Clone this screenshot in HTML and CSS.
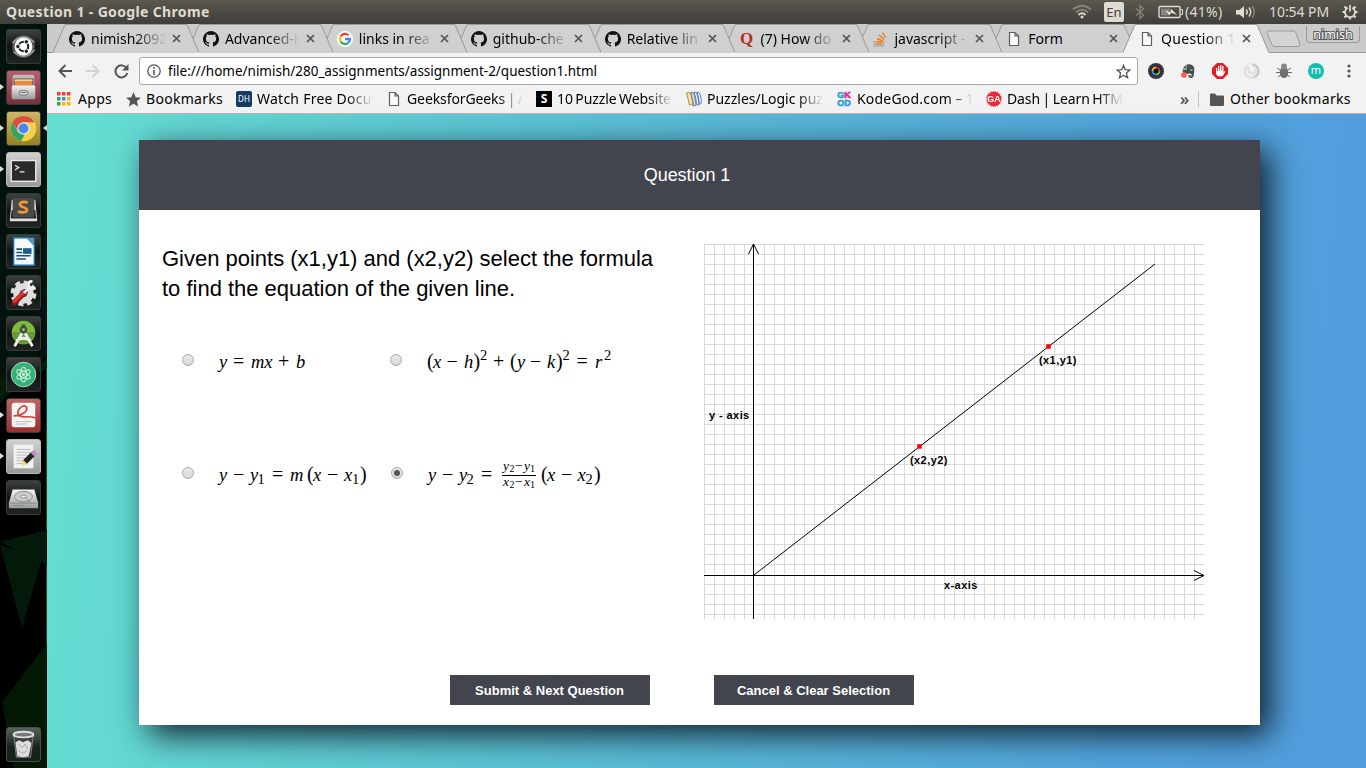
FILE: index.html
```html
<!DOCTYPE html>
<html lang="en">
<head>
<meta charset="utf-8">
<title>Question 1</title>
<link rel="stylesheet" href="styles.css">
</head>
<body>
<svg class="defs" width="0" height="0">
  <defs>
    <symbol id="github" viewBox="0 0 16 16"><path fill="#111" d="M8 0a8 8 0 0 0-2.5 15.6c.4.1.5-.2.5-.4v-1.4c-2.2.5-2.7-1-2.7-1-.4-.9-.9-1.2-.9-1.2-.7-.5.1-.5.1-.5.8.1 1.2.8 1.2.8.7 1.3 1.9.9 2.3.7.1-.5.3-.9.5-1.1C3.700 11.300 2.900 10 2.900 7.500c0-.9.300-1.600.800-2.100-.1-.2-.4-1 .1-2.100 0 0 .7-.2 2.200.8a7.500 7.500 0 0 1 4 0c1.500-1 2.200-.8 2.200-.8.4 1.100.2 1.900.1 2.100.5.600.8 1.300.8 2.100 0 2.500-1 3.800-3.600 4.100.3.200.5.700.5 1.400v2.200c0 .2.1.5.500.4A8 8 0 0 0 8 0Z"/></symbol>
    <symbol id="page" viewBox="0 0 12 16"><path fill="#fafafa" stroke="#606060" stroke-width="1.2" d="M1.500 1.500h5.500l3.500 3.500v9.500h-9zM7 1.500v3.500h3.500"/></symbol>
    <symbol id="close" viewBox="0 0 9 9"><path stroke="#555" stroke-width="1.7" d="M1 1l7 7M8 1l-7 7"/></symbol>
    <symbol id="tabshape" viewBox="0 0 146 29"><path fill="#d0d0d0" d="M0 29L12 .5H134L146 29Z"/><path fill="none" stroke="#999" d="M0 28.500L12 .5H134L146 28.500"/></symbol>
    <linearGradient id="metal" x2="0" y2="1"><stop stop-color="#f4f4f4"/><stop offset="1" stop-color="#999"/></linearGradient>
  </defs>
</svg>
<div class="screen">
  <header class="panel">
    <span class="wintitle">Question 1 - Google Chrome</span>
    <div class="tray">
      <svg class="wifi" width="20" height="16" viewBox="0 0 20 16" fill="none" stroke-width="1.800"><path stroke="#85827a" d="M1 5.500Q10-2 19 5.500M4 8.500Q10 3 16 8.500"/><path stroke="#dfdbd2" d="M6.500 11Q10 7.500 13.500 11"/><circle cx="10" cy="13" r="1.500" fill="#dfdbd2"/></svg>
      <span class="lang">En</span>
      <svg class="bt" width="10" height="16" viewBox="0 0 10 16" fill="none" stroke="#85827a" stroke-width="1.300"><path d="M1 4.500L8.500 11L5 14.500V1.500L8.500 5L1 11.500"/></svg>
      <svg class="batt" width="25" height="14" viewBox="0 0 25 14"><rect x="1" y="1.500" width="21" height="11" rx="1" fill="none" stroke="#dfdbd2" stroke-width="1.400"/><path fill="#898780" d="M3 3.500h9v7H3z"/><path fill="none" stroke="#dfdbd2" d="M22.500 4.500h2v5h-2"/><path fill="#eeeae2" stroke="#45433d" stroke-width=".6" d="M5 3.500L12 7l1-3.500 7 7L13 8l-1.500 3z"/></svg>
      <span class="pct">(41%)</span>
      <svg class="vol" width="20" height="14" viewBox="0 0 20 14"><path fill="#dfdbd2" d="M0 5h3.500L8 1v12L3.500 9.500H0z"/><path fill="none" stroke="#dfdbd2" stroke-width="1.500" d="M10 4.500q2.500 2.500 0 5M13 2.500q3.500 4.500 0 9"/><path fill="none" stroke="#85827a" stroke-width="1.500" d="M16 1q4.500 6 0 12"/></svg>
      <span class="clock">10:54 PM</span>
      <svg class="gear" width="16" height="16" viewBox="0 0 16 16" fill="none" stroke="#dfdbd2"><path stroke-width="1.700" d="M5.800 3.700a5 5 0 1 0 4.400 0M8 1v6.500"/><path stroke-width="2.200" d="M.5 8h2.500M13 8h2.500M2.500 2.500L4.300 4.300M13.500 2.500l-1.800 1.800M2.500 13.500l1.800-1.800M13.500 13.500l-1.800-1.800M8 13v2.500"/></svg>
    </div>
  </header>
  <div class="desktop">
    <nav class="launcher">
      <svg class="wall" width="47" height="744" viewBox="0 0 47 744"><path fill="#02120d" d="M0 0h47v330L0 380z"/><path fill="#03190a" d="M0 518L47 506v35zM0 521l42 13-20 70z"/><path fill="#041905" d="M47 620L2 678l12 66h33z"/><path fill="#08110f" d="M20 190l27 90v60z"/><path fill="#041c09" d="M0 354l47-18v8L0 376z"/></svg>
      <span class="tile black"><svg viewBox="0 0 35 35"><circle cx="17.500" cy="17.500" r="12" fill="#555"/><path d="M6 14Q16 2 29 13M29 21Q20 33 7 23" fill="none" stroke="#999" stroke-width="2"/><circle cx="17.500" cy="17.500" r="9.500" fill="#fff"/><circle cx="17.500" cy="17.500" r="5" fill="none" stroke="#222" stroke-width="2.200"/><g fill="#222" stroke="#fff"><circle cx="11.500" cy="17.500" r="2.300"/><circle cx="20.500" cy="12.500" r="2.300"/><circle cx="20.500" cy="22.500" r="2.300"/></g></svg></span>
      <span class="tile wine run"><svg viewBox="0 0 35 35"><rect x="6" y="4" width="23" height="13" rx="2" fill="#bbb"/><path fill="#444" d="M7 8h21v8H7z"/><path fill="#ef8a3c" d="M8 9h19v6H8z"/><path fill="#ffe0b0" d="M8 9h19v1.500H8z"/><rect x="5" y="15" width="25" height="15" rx="2" fill="url(#metal)"/><rect x="13" y="21" width="9" height="4.500" rx="2" fill="#eee" stroke="#666"/><path d="M14.500 23h6" stroke="#555"/></svg></span>
      <span class="tile gold run focus"><svg viewBox="0 0 35 35"><circle cx="17.500" cy="17.500" r="13.500" fill="#f8cf48"/><path fill="#dd4d40" d="M5.800 11A13.500 13.500 0 0 1 29.200 11H17.500L12 21z"/><path fill="#33a363" d="M5.800 11l6 10.500 7 2.500-4 6.700A13.500 13.500 0 0 1 5.800 11z"/><circle cx="17.500" cy="17.500" r="6.500" fill="#eee"/><circle cx="17.500" cy="17.500" r="5.300" fill="#4686ed"/></svg></span>
      <span class="tile silver run"><svg viewBox="0 0 35 35"><rect x="4.500" y="8" width="26" height="22" fill="#292b2a" stroke="#e8e8e8" stroke-width="1.500"/><path d="M8.500 13l4 2.500-4 2.500M13.500 20h5" fill="none" stroke="#eee" stroke-width="1.300"/></svg></span>
      <span class="tile black"><svg viewBox="0 0 35 35"><path fill="#ddd" d="M5 6h25l2 22q0 1-1 1H4q-1 0-1-1z"/><path fill="#222" d="M5 17h25l1 9H4z"/><rect x="6" y="4" width="23" height="21" rx="2" fill="#4a4a4a"/><path d="M22 9.500c-5-3-12 1-6 4 7 2 7 6 0 6q-3 0-4-1.500" fill="none" stroke="#f29a31" stroke-width="2.800"/></svg></span>
      <span class="tile black"><svg viewBox="0 0 35 35"><path fill="#f5f8fa" stroke="#1770a8" stroke-width="1.500" d="M7 3h15l7 8v21H7z"/><path fill="#4f9ac8" d="M20 3h9v9z"/><path stroke="#164d78" stroke-width="1.700" d="M10 15h6M10 18.500h6M10 22h15M10 25.500h10"/><path fill="#1d5d8c" d="M17 14h9v6h-9z"/></svg></span>
      <span class="tile black"><svg viewBox="0 0 35 35"><circle cx="17.500" cy="18.500" r="11" fill="#ddd"/><circle cx="17.500" cy="18.500" r="12" fill="none" stroke="#ddd" stroke-width="3.500" stroke-dasharray="5.500 3.900"/><circle cx="17.500" cy="18.500" r="4" fill="#555"/><path stroke="#921717" stroke-width="6" stroke-linecap="round" d="M8 28L19 17"/><path stroke="#dd3535" stroke-width="3.500" stroke-linecap="round" d="M8 27L18 17"/><path stroke="#eee" stroke-width="3" d="M18 18l6-6"/><path fill="none" stroke="#eee" stroke-width="3" d="M27 6q-5-1-4 5 2 4 7 1"/></svg></span>
      <span class="tile black"><svg viewBox="0 0 35 35"><circle cx="17.500" cy="16.500" r="12.500" fill="#7dbb3d"/><path fill="#689936" d="M5 16h25a12.500 12.500 0 0 1-25 0"/><path fill="none" stroke="#eee" stroke-width="3" d="M16 17L8 31M19 17l8 14M10 25q7-5 15 0"/><circle cx="17.500" cy="13.500" r="4" fill="#414b4c"/><path fill="#414b4c" d="M15.500 8h4v5h-4z"/><circle cx="17.500" cy="13.500" r="1.500" fill="#9ac96e"/></svg></span>
      <span class="tile black"><svg viewBox="0 0 35 35"><circle cx="17.500" cy="17.500" r="13" fill="#35b178" stroke="#b4dfc8"/><g fill="none" stroke="#c9ecd8" stroke-width="1.200"><ellipse cx="17.500" cy="17.500" rx="3.200" ry="8"/><ellipse cx="17.500" cy="17.500" rx="3.200" ry="8" transform="rotate(60 17.500 17.500)"/><ellipse cx="17.500" cy="17.500" rx="3.200" ry="8" transform="rotate(120 17.500 17.500)"/></g><circle cx="17.500" cy="17.500" r="1.500" fill="#e5fff0"/></svg></span>
      <span class="tile red run"><svg viewBox="0 0 35 35"><rect x="5" y="4" width="25" height="26" rx="3" fill="#f4f4f4"/><path fill="none" stroke="#d94141" stroke-width="1.800" d="M7 18C14 18 22 14 21 9C18 4 10 11 12 17C15 21 22 17 30 20"/><path stroke="#bbb" d="M9 24h17M9 26.500h12"/></svg></span>
      <span class="tile silver run"><svg viewBox="0 0 35 35"><rect x="7" y="5" width="21" height="25" fill="#f1f1f1"/><path stroke="#bbb" d="M10 10h15M10 13h15M10 16h13M10 19h10M10 22h8M10 25h7"/><path stroke="#222" stroke-width="5.500" d="M19 23.500L28 14.500"/><path stroke="#c38ac7" stroke-width="5.500" d="M27 15.500l3-3"/><path fill="#ead768" d="M16 27l1.500-5.500 4 4z"/></svg></span>
      <span class="tile black"><svg viewBox="0 0 35 35"><path fill="url(#metal)" d="M6 9h23l4 14v6H2v-6z"/><ellipse cx="17.500" cy="16.500" rx="9.500" ry="5.500" fill="#ccc" stroke="#888"/><ellipse cx="17.500" cy="16.500" rx="3" ry="1.600" fill="#eee" stroke="#888"/><path stroke="#888" d="M3 23.500h29M20 18l5 5M7 26h12"/></svg></span>
      <span class="tile trash"><svg viewBox="0 0 35 35"><path fill="#444" fill-opacity=".7" stroke="#aaa" stroke-width=".7" d="M7 7h21l-3 24H10z"/><path fill="#ddd" d="M9 15l4-2 4 2 5-2 4 3-3 14-6 1-6-1z"/><path stroke="#aaa" fill="none" d="M12 17l4 4 3-4 3 5M12 24l5 3 4-3"/><ellipse cx="17.500" cy="7" rx="10.500" ry="3" fill="#777" stroke="#ddd" stroke-width="2"/></svg></span>
    </nav>
    <main class="browser">
      <div class="tabs">
        <div class="tab t1"><svg class="shape"><use href="#tabshape"/></svg><svg class="fav"><use href="#github"/></svg><span class="tt">nimish2092</span><svg class="x"><use href="#close"/></svg></div>
        <div class="tab t2"><svg class="shape"><use href="#tabshape"/></svg><svg class="fav"><use href="#github"/></svg><span class="tt">Advanced-H</span><svg class="x"><use href="#close"/></svg></div>
        <div class="tab t3"><svg class="shape"><use href="#tabshape"/></svg><svg class="fav" viewBox="0 0 16 16"><circle cx="8" cy="8" r="8" fill="#fff"/><g fill="none" stroke-width="2.300"><path stroke="#ea4335" d="M3.600 5.500A5 5 0 0 1 11.500 4.300"/><path stroke="#fbbc05" d="M3.600 5.500a5 5 0 0 0 0 5"/><path stroke="#34a853" d="M3.600 10.500a5 5 0 0 0 7.600 1.300"/><path stroke="#4285f4" d="M11.200 11.800Q13 10 13 8H8"/></g></svg><span class="tt">links in rea</span><svg class="x"><use href="#close"/></svg></div>
        <div class="tab t4"><svg class="shape"><use href="#tabshape"/></svg><svg class="fav"><use href="#github"/></svg><span class="tt">github-che</span><svg class="x"><use href="#close"/></svg></div>
        <div class="tab t5"><svg class="shape"><use href="#tabshape"/></svg><svg class="fav"><use href="#github"/></svg><span class="tt">Relative lin</span><svg class="x"><use href="#close"/></svg></div>
        <div class="tab t6"><svg class="shape"><use href="#tabshape"/></svg><span class="fav quora">Q</span><span class="tt">(7) How do</span><svg class="x"><use href="#close"/></svg></div>
        <div class="tab t7"><svg class="shape"><use href="#tabshape"/></svg><svg class="fav" viewBox="0 0 16 16" fill="none" stroke-width="1.500"><path stroke="#aaa" d="M2.500 10v5h9v-5"/><path stroke="#ee8024" d="M4 13h6M4 10.500l6.500.8M5 7.500l6 2.500M7 4l5 4.500M10.500 1.500l3 5.500"/></svg><span class="tt">javascript -</span><svg class="x"><use href="#close"/></svg></div>
        <div class="tab t8"><svg class="shape"><use href="#tabshape"/></svg><svg class="fav"><use href="#page"/></svg><span class="tt solid">Form</span><svg class="x"><use href="#close"/></svg></div>
        <div class="tab active"><svg class="shape" viewBox="0 0 146 29"><path fill="#f2f2f2" d="M0 29L12 .5H134L146 29Z"/><path fill="none" stroke="#999" d="M0 28.500L12 .5H134L146 28.500"/></svg><svg class="fav"><use href="#page"/></svg><span class="tt">Question 1</span><svg class="x"><use href="#close"/></svg></div>
        <svg class="newtab" width="36" height="18" viewBox="0 0 36 18"><path fill="#d4d4d4" stroke="#999" d="M2.500 1H27q2 0 3 2l4 11q.5 2.500-2 2.500H9q-2 0-3-2L1 3q0-2 1.500-2z"/></svg>
        <span class="profile">nimish</span>
      </div>
      <div class="toolbar">
        <svg class="nav" width="14" height="14" viewBox="0 0 14 14" fill="none" stroke="#555" stroke-width="2"><path d="M14 7H1.500M7.500 1L1.500 7l6 6"/></svg>
        <svg class="nav" width="14" height="14" viewBox="0 0 14 14" fill="none" stroke="#d2d2d2" stroke-width="2"><path d="M0 7h12.500M6.500 1l6 6-6 6"/></svg>
        <svg class="nav" width="15" height="15" viewBox="0 0 15 15"><path fill="none" stroke="#555" stroke-width="2" d="M12.500 4A6 6 0 1 0 13.300 9"/><path fill="#555" d="M14.500 0v6.500H8z"/></svg>
        <div class="omnibox">
          <svg width="14" height="14" viewBox="0 0 14 14"><circle cx="7" cy="7" r="6.200" fill="none" stroke="#555" stroke-width="1.300"/><path fill="#555" d="M6.200 6h1.600v5H6.200zM6.200 3h1.600v1.700H6.200z"/></svg>
          <span class="url">file:///home/nimish/280_assignments/assignment-2/question1.html</span>
          <svg class="star" width="15" height="15" viewBox="0 0 16 16"><path fill="none" stroke="#555" stroke-width="1.400" d="M8 1.500l1.900 4.600 5 .4-3.800 3.200 1.200 4.900L8 12l-4.300 2.600 1.200-4.900L1.100 6.500l5-.4z"/></svg>
        </div>
        <div class="exts">
          <svg viewBox="0 0 16 16"><circle cx="8" cy="8" r="8" fill="#333842"/><circle cx="8" cy="8" r="5.300" fill="#15171c"/><path fill="#d52b71" d="M8 8V3.500A4.500 4.500 0 0 1 12.500 8z"/><path fill="#55c63b" d="M8 8h4.500A4.500 4.500 0 0 1 8 12.500z"/><path fill="#2e8ed1" d="M8 8v4.500A4.500 4.500 0 0 1 3.500 8z"/><path fill="#e4b722" d="M8 8H3.500A4.500 4.500 0 0 1 8 3.500z"/><circle cx="8" cy="8" r="2.500" fill="#111"/></svg>
          <svg viewBox="0 0 16 16"><path fill="#45504f" d="M2.500 5.500L6 2v3.500zM6.500 1.500q5-1 6.500 1.500 2 1 1 7 0 5-3 5-3 0-2.500-3h2v1.300h1V11q-3-1-3.500 0l-5-1.500L2.500 6.500h4z"/><circle cx="4" cy="12" r="2.800" fill="#ff5656"/><path fill="#eee" d="M10.500 6.500h2v1h-2z"/></svg>
          <svg viewBox="0 0 16 16"><path fill="#e51b23" d="M5 0h6l5 5v6l-5 5H5l-5-5V5z"/><path fill="#fff" d="M4 5h1.200v3h.8V3h1.300v4.500h.8V2h1.300v5.500h.8V3h1.300v6l1-1 1 .7-3 4.500H6L4 11z"/></svg>
          <svg viewBox="0 0 16 16" fill="none" stroke-width="2.500"><path stroke="#c8c8c8" d="M8 1.500A6.500 6.500 0 0 1 8 14.500"/><path stroke="#e0e0e0" d="M10 13.800A6 6 0 0 1 4 2.500M5 4q-2 6 4 6.500 4-1 2-5"/></svg>
          <svg viewBox="0 0 16 16"><ellipse cx="8" cy="9.500" rx="4.300" ry="5.500" fill="#707070"/><circle cx="8" cy="3.500" r="3" fill="#888"/><path stroke="#707070" fill="none" d="M1 5l3 2M15 5l-3 2M0 9.500h16M2 14l3-2M14 14l-3-2"/></svg>
          <span class="mm">m</span>
        </div>
        <svg class="dots" width="4" height="14" viewBox="0 0 4 14" fill="#555"><circle cx="2" cy="2" r="1.600"/><circle cx="2" cy="7" r="1.600"/><circle cx="2" cy="12" r="1.600"/></svg>
      </div>
      <div class="bookmarks">
        <span class="bm apps"><svg width="14" height="14" viewBox="0 0 14 14"><path fill="#ea4335" d="M0 0h3.500v3.500H0zM5 0h3.500v3.500H5zM10 0h3.500v3.500H10z"/><path fill="#34a05a" d="M0 5h3.500v3.500H0zM0 10h3.500v3.500H0z"/><path fill="#4285f4" d="M5 5h3.500v3.500H5z"/><path fill="#f5b50a" d="M10 5h3.500v3.500H10zM5 10h3.500v3.500H5zM10 10h3.500v3.500H10z"/></svg><b>Apps</b></span>
        <span class="bm own"><svg width="15" height="15" viewBox="0 0 16 16"><path fill="#555" d="M8 0l2.300 5.500 5.700.5-4.400 3.700L13 15.500 8 12.400l-5 3.100 1.400-5.800L0 6l5.700-.5z"/></svg><b>Bookmarks</b></span>
        <span class="bm fade"><i class="dh">DH</i><b class="wide">Watch Free Docu</b></span>
        <span class="bm fade"><svg width="16" height="16"><use href="#page"/></svg><b class="snug">GeeksforGeeks | A</b></span>
        <span class="bm fade"><i class="sq">S</i><b class="snug">10 Puzzle Website</b></span>
        <span class="bm fade"><svg width="16" height="16" viewBox="0 0 16 16"><path fill="#f2dfa4" stroke="#806a36" stroke-width=".7" d="M.5 2q4-2 5 3l2 10q-2-3-4-1z"/><path fill="#f5e8bd" stroke="#496c93" stroke-width=".8" d="M5 1q3 0 3.500 4L10 14l-2 1L6 6z"/><path fill="#fff" stroke="#3d74c4" stroke-width=".9" d="M8 1q3 0 3.500 4L13 13l-2 1.500L9.500 6zM11 1q3 0 3.500 4l1 7-2 1.500L12.500 6z"/></svg><b>Puzzles/Logic puz</b></span>
        <span class="bm fade"><i class="gk"><em>G<u>K</u></em><em>OD</em></i><b class="kg">KodeGod.com – 1</b></span>
        <span class="bm fade"><i class="ga">GA</i><b class="snug">Dash | Learn HTM</b></span>
        <span class="more">»</span>
        <span class="bm other"><svg width="14" height="13" viewBox="0 0 14 13"><path fill="#555" d="M0 1.500Q0 .5 1 .5h4l1.500 2H13q1 0 1 1V12q0 1-1 1H1q-1 0-1-1z"/></svg><b>Other bookmarks</b></span>
      </div>
      <div class="page">
        <section class="card">
          <h1>Question 1</h1>
          <div class="body">
            <div class="left">
              <p class="prompt">Given points (x1,y1) and (x2,y2) select the formula<br>to find the equation of the given line.</p>
              <div class="options">
                <label><span class="radio"></span><svg class="math" width="150" height="40"><text y="28"><tspan x="0">y</tspan><tspan class="n" x="14">=</tspan><tspan x="32">mx</tspan><tspan class="n" x="59">+</tspan><tspan x="77">b</tspan></text></svg></label>
                <label><span class="radio"></span><svg class="math" width="200" height="40"><text y="28"><tspan class="n" x="0">(</tspan><tspan x="6">x</tspan><tspan class="n" x="19.500">−</tspan><tspan x="37">h</tspan><tspan class="n" x="46.500">)</tspan><tspan class="n" x="66">+</tspan><tspan class="n" x="83">(</tspan><tspan x="90">y</tspan><tspan class="n" x="103">−</tspan><tspan x="120">k</tspan><tspan class="n" x="129">)</tspan><tspan class="n" x="149.500">=</tspan><tspan x="168">r</tspan></text><text class="s" y="20"><tspan x="53">2</tspan><tspan x="135.500">2</tspan><tspan x="177">2</tspan></text></svg></label>
                <label><span class="radio"></span><svg class="math" width="150" height="40"><text y="28"><tspan x="0">y</tspan><tspan class="n" x="14">−</tspan><tspan x="31">y</tspan><tspan class="n" x="53">=</tspan><tspan x="71">m</tspan><tspan class="n" x="88">(</tspan><tspan x="94">x</tspan><tspan class="n" x="108">−</tspan><tspan x="125">x</tspan><tspan class="n" x="141">)</tspan></text><text class="s" y="31"><tspan x="38.500">1</tspan><tspan x="133">1</tspan></text></svg></label>
                <label class="fourth"><span class="radio on"></span><svg class="math" width="200" height="40"><text y="28"><tspan x="0">y</tspan><tspan class="n" x="14">−</tspan><tspan x="31">y</tspan><tspan class="n" x="53">=</tspan><tspan class="n" x="113">(</tspan><tspan x="119">x</tspan><tspan class="n" x="133">−</tspan><tspan x="149.500">x</tspan><tspan class="n" x="166">)</tspan></text><text class="s" y="31"><tspan x="38.500">2</tspan><tspan x="157.500">2</tspan></text><path d="M74 22.500h34" stroke="#000"/><text class="f" y="17"><tspan x="75">y</tspan><tspan class="m" x="87">−</tspan><tspan x="96">y</tspan></text><text class="ss" y="19"><tspan x="81.500">2</tspan><tspan x="102">1</tspan></text><text class="f" y="33"><tspan x="75">x</tspan><tspan class="m" x="87">−</tspan><tspan x="96">x</tspan></text><text class="ss" y="35"><tspan x="81.500">2</tspan><tspan x="102">1</tspan></text></svg></label>
              </div>
            </div>
            <svg class="graph" width="500" height="375" viewBox="0 0 500 375">
              <defs><pattern id="grid" width="10" height="10" patternUnits="userSpaceOnUse"><path d="M.5 0V10M0 .5H10" stroke="#d9d9d9"/></pattern></defs>
              <rect width="500" height="375" fill="url(#grid)"/>
              <path d="M50.500 0V375M0 330.500H500" stroke="#fff"/>
              <path d="M49.500 0V375M0 331.500H500" stroke="#000"/>
              <path d="M44.500 10L49.500 0l5 10M490 326.500l10 5-10 5M50 331L451 20" fill="none" stroke="#000"/>
              <path fill="#f00" d="M342.200 100.200h4.500v4.500h-4.500zM213.200 200.200h4.500v4.500h-4.500z"/>
              <g class="lbl"><text x="5" y="175">y - axis</text><text x="240" y="345">x-axis</text><text x="335" y="120">(x1,y1)</text><text x="206" y="220">(x2,y2)</text></g>
            </svg>
          </div>
          <div class="actions"><button>Submit &amp; Next Question</button><button>Cancel &amp; Clear Selection</button></div>
        </section>
      </div>
    </main>
  </div>
</div>
</body>
</html>
```
FILE: styles.css
```css
* { box-sizing: border-box; }
body { margin: 0; font-family: "Noto Sans", sans-serif; overflow: hidden; }
svg { display: block; flex: none; }
.defs { position: absolute; }
.screen { width: 1366px; height: 768px; display: flex; flex-direction: column; overflow: hidden; }
.panel { height: 24px; flex: none; display: flex; justify-content: space-between; align-items: center; padding: 0 8px 1px 6px; background: linear-gradient(#5b584f, #3f3e39); color: #dfdbd2; font-size: 14px; }
.wintitle { font-weight: 700; font-size: 14px; letter-spacing: .35px; }
.tray { display: flex; align-items: center; }
.wifi { margin-right: 12px; }
.lang { width: 20px; height: 20px; line-height: 20px; text-align: center; background: #dfdbd2; color: #45433d; border-radius: 2px; font-size: 13px; margin-right: 11px; }
.bt { margin-right: 13px; }
.batt { margin-right: 2px; }
.pct { width: 39px; white-space: nowrap; margin-right: 12px; letter-spacing: .3px; }
.vol { margin-right: 13px; }
.clock { width: 61px; white-space: nowrap; margin-right: 12px; letter-spacing: -.05px; }
.desktop { flex: 1; display: flex; min-height: 0; }
.launcher { position: relative; width: 47px; flex: none; background: #000; border-right: 1px solid #303d39; padding: 5px 0 6px 6px; display: flex; flex-direction: column; gap: 6px; }
.wall { position: absolute; left: 0; top: 0; }
.tile { position: relative; width: 35px; height: 35px; flex: none; border-radius: 3px; border: 1px solid #353b39; }
.tile svg { width: 33px; height: 33px; }
.black { background: linear-gradient(#3d4240, #101312 50%, #202524); }
.wine { background: linear-gradient(#b96070, #78303e); }
.gold { background: linear-gradient(#cdb668, #978023); }
.silver { background: linear-gradient(#d0d0d0, #999); border-color: #bbb; }
.red { background: linear-gradient(#bf6363, #9b3030); }
.trash { margin-top: auto; border-color: #485049; background: linear-gradient(#59605a, #17221a 60%); }
.run::before { content: ""; position: absolute; left: -7px; top: 13px; border: solid transparent; border-width: 3.5px 0 3.5px 4px; border-left-color: #ddd; }
.focus::after { content: ""; position: absolute; right: -7px; top: 13px; border: solid transparent; border-width: 3.5px 4px 3.5px 0; border-right-color: #ddd; }
.browser { flex: 1; min-width: 0; display: flex; flex-direction: column; background: #f2f2f2; }
.tabs { height: 29px; flex: none; display: flex; padding-left: 6px; background: #cbcbcb; box-shadow: inset 0 -1px #999; }
.tab { position: relative; z-index: 1; isolation: isolate; width: 146px; height: 29px; flex: none; margin-right: -12.100px; display: flex; align-items: center; padding-left: 16px; font-size: 14px; }
.shape { position: absolute; left: 0; top: 0; width: 146px; height: 29px; z-index: -1; }
.t1 { z-index: 9; } .t2 { z-index: 8; } .t3 { z-index: 7; } .t4 { z-index: 6; } .t5 { z-index: 5; } .t6 { z-index: 4; } .t7 { z-index: 3; } .t8 { z-index: 2; }
.active { z-index: 10; margin-left: -1.200px; }
.fav { width: 16px; height: 16px; margin-right: 6px; }
.tt { width: 75px; overflow: hidden; white-space: nowrap; line-height: 24px; margin-right: 6px; -webkit-mask-image: linear-gradient(90deg, #000 58%, transparent); }
.solid { -webkit-mask-image: none; }
.active .tt { letter-spacing: .3px; }
.x { width: 9px; height: 9px; }
.quora { font: 700 17px/16px "Liberation Serif", serif; color: #b92b1b; text-align: center; }
.newtab { margin: 6px 0 0 9px; }
.profile { width: 54px; height: 17px; margin: 2px 6px 0 auto; border: 1px solid #999; border-top: 0; border-radius: 0 0 4px 4px; text-align: center; font-size: 12.500px; line-height: 17px; color: #fff; -webkit-text-stroke: 2px #555; paint-order: stroke fill; }
.toolbar { height: 35px; flex: none; display: flex; align-items: center; padding: 1px 15px 0 11px; }
.nav { margin-right: 14px; }
.nav:nth-child(3) { margin-right: 10px; }
.omnibox { width: 999px; height: 28px; background: #fff; border: 1px solid #a9a9a9; border-radius: 3px; display: flex; align-items: center; padding: 0 6px 0 7px; }
.url { font-size: 13.500px; margin-left: 7px; white-space: nowrap; letter-spacing: -.01px; }
.star { margin-left: auto; }
.exts { display: flex; gap: 16px; margin-left: 10px; }
.exts svg, .mm { width: 16px; height: 16px; }
.mm { border-radius: 50%; background: #12bfae; color: #fff; font-size: 11px; line-height: 14px; text-align: center; }
.dots { margin-left: auto; }
.bookmarks { height: 26px; flex: none; display: flex; align-items: center; padding: 0 0 3px 10px; border-bottom: 1px solid #b5b5b5; font-size: 14px; }
.bm { display: flex; align-items: center; height: 20px; white-space: nowrap; }
.bm b { font-weight: 400; line-height: 20px; }
.apps { width: 69px; gap: 7px; letter-spacing: .3px; }
.own { width: 110px; gap: 5px; letter-spacing: .3px; }
.fade { width: 150px; gap: 5px; }
.fade b { width: 116px; overflow: hidden; -webkit-mask-image: linear-gradient(90deg, #000 78%, transparent); }
.fade .snug { letter-spacing: -.1px; word-spacing: -1px; }
.fade .wide { letter-spacing: .25px; }
.fade .kg { letter-spacing: .2px; word-spacing: -.5px; }
.bm i { width: 16px; height: 16px; font-style: normal; text-align: center; color: #fff; flex: none; }
.dh { background: #123b63; border-radius: 2px; font-size: 8px; line-height: 16px; }
.sq { background: #000; font-size: 12px; font-weight: 700; line-height: 16px; }
.bm .gk { display: flex; flex-direction: column; color: #2b9fd8; font: 700 9px/8px "Liberation Sans", sans-serif; -webkit-text-stroke: .6px; }
.gk em { font-style: normal; height: 8px; overflow: hidden; }
.gk u { color: #e02c92; text-decoration: none; }
.ga { background: #e92736; border-radius: 50%; font: 700 9px/14px "Liberation Sans", sans-serif; border: 1px dotted #fff; }
.more { width: 9px; margin: 0 9px 0 44px; font-size: 16px; font-weight: 600; line-height: 16px; color: #555; }
.other { gap: 6px; padding-left: 11px; border-left: 1px solid #c5c5c5; height: 16px; letter-spacing: .33px; }
.page { flex: 1; min-height: 0; padding: 26px 106px 43px 92px; background: linear-gradient(95deg, #65dfd1, #59b9d6 50%, #52a4dd 82%, #529cdc); }
.card { width: 1121px; height: 585px; background: #fff; box-shadow: 10px 10px 30px #112330; font-family: "Liberation Sans", sans-serif; display: flex; flex-direction: column; }
h1 { margin: 0; height: 70px; background: #42454e; color: #fff; font-weight: 400; font-size: 18px; line-height: 70px; text-align: center; padding-right: 25px; letter-spacing: -.05px; }
.body { display: flex; height: 465px; padding: 34px 56px 0 23px; justify-content: space-between; }
.prompt { margin: 0; font-size: 22px; line-height: 30px; white-space: nowrap; letter-spacing: -.01px; }
.options { display: grid; grid-template-columns: 208px 260px; grid-auto-rows: 113px; margin: 36px 0 0 20px; }
.options label { display: flex; align-items: flex-start; gap: 25px; }
.options .fourth { padding-left: 1px; }
.radio { flex: none; width: 12px; height: 12px; margin-top: 14px; border: 1px solid #aaa; border-radius: 50%; background: linear-gradient(#e8e8e8, #d9d9d9); display: grid; place-items: center; }
.on::after { content: ""; width: 6px; height: 6px; border-radius: 50%; background: #555; }
.math { font-family: "Liberation Serif", serif; font-style: italic; font-size: 18.500px; overflow: visible; }
.math .n, .math .m, .s, .ss { font-style: normal; }
.math .n { font-size: 20px; }
.s { font-size: 14.500px; }
.f { font-size: 13.500px; }
.ss { font-size: 10px; }
.lbl { font-size: 11px; font-weight: 700; letter-spacing: .42px; }
.actions { display: flex; gap: 64px; padding-left: 311px; }
.actions button { width: 200px; height: 30px; border: 0; padding: 0 1px 0 0; background: #42454e; color: #fff; font: 700 13px "Liberation Sans", sans-serif; }
```
